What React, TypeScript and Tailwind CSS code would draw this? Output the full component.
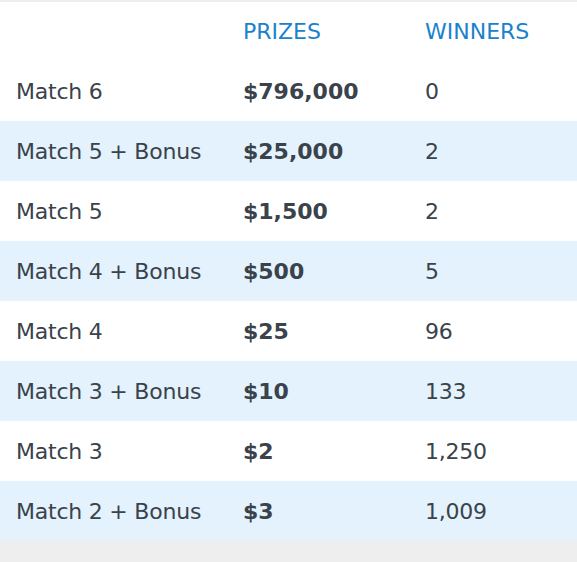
const rows = [
  { name: "Match 6", prize: "$796,000", winners: "0" },
  { name: "Match 5 + Bonus", prize: "$25,000", winners: "2" },
  { name: "Match 5", prize: "$1,500", winners: "2" },
  { name: "Match 4 + Bonus", prize: "$500", winners: "5" },
  { name: "Match 4", prize: "$25", winners: "96" },
  { name: "Match 3 + Bonus", prize: "$10", winners: "133" },
  { name: "Match 3", prize: "$2", winners: "1,250" },
  { name: "Match 2 + Bonus", prize: "$3", winners: "1,009" },
];

export default function App() {
  return (
    <div className="w-[577px] h-[562px] bg-[#eeeeee] pt-[2px] font-['DejaVu_Sans',sans-serif] text-[#3a424b]">
      <div className="bg-white">
        {/* Header */}
        <div className="grid grid-cols-[213px_182px_182px] h-[59px] items-center text-[22px] text-[#1a82cc]">
          <div />
          <div className="pl-[30px]">PRIZES</div>
          <div className="pl-[30px]">WINNERS</div>
        </div>

        {rows.map((r, i) => (
          <div
            key={r.name}
            className={`grid grid-cols-[213px_182px_182px] h-[60px] items-center text-[22px] ${
              i % 2 === 1 ? "bg-[#e3f2fd]" : "bg-white"
            }`}
          >
            <div className="pl-[16px] tracking-[-0.01em]">{r.name}</div>
            <div className="pl-[30px] font-bold">{r.prize}</div>
            <div className="pl-[30px] tracking-[-0.01em]">{r.winners}</div>
          </div>
        ))}
      </div>
    </div>
  );
}
